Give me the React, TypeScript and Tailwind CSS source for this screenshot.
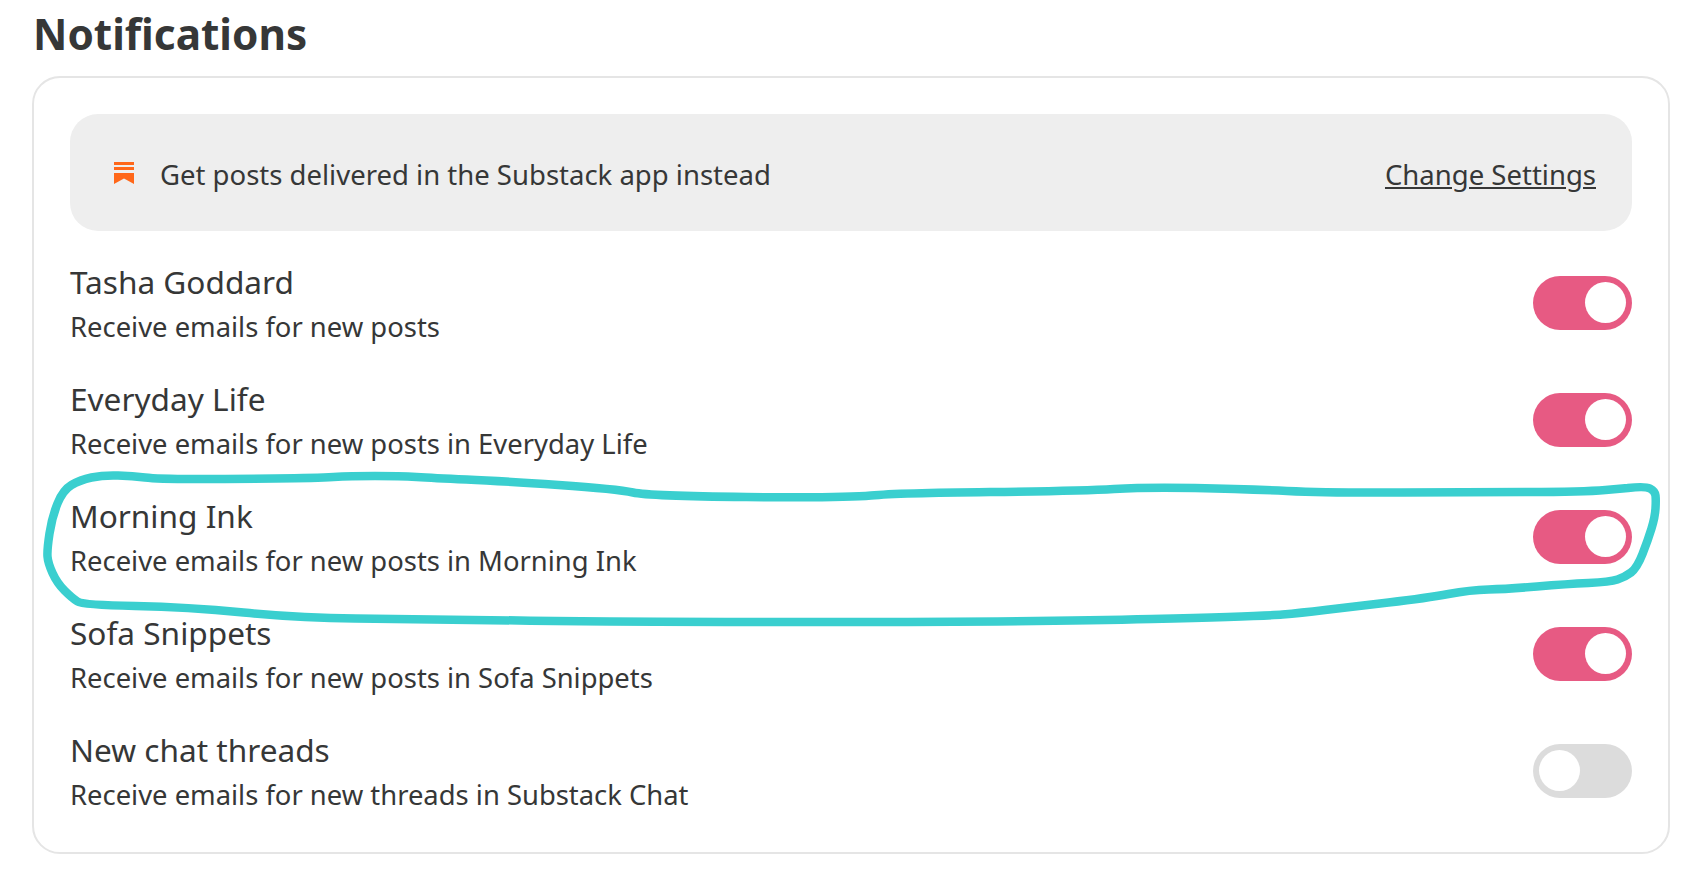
const rows = [
  { name: 'Tasha Goddard', sub: 'Receive emails for new posts', on: true },
  { name: 'Everyday Life', sub: 'Receive emails for new posts in Everyday Life', on: true },
  { name: 'Morning Ink', sub: 'Receive emails for new posts in Morning Ink', on: true },
  { name: 'Sofa Snippets', sub: 'Receive emails for new posts in Sofa Snippets', on: true },
  { name: 'New chat threads', sub: 'Receive emails for new threads in Substack Chat', on: false },
];

// hand-drawn annotation round the Morning Ink row
const scribble = [
  [1628, 488], [1645, 486], [1655, 491], [1656, 500], [1655, 517], [1648, 540], [1637, 568], [1625, 577],
  [1610, 582], [1567, 584], [1507, 589], [1470, 590], [1427, 598], [1350, 607], [1300, 613], [1265, 616],
  [1038, 622], [627, 622], [411, 619], [300, 618], [187, 607], [83, 605], [72, 598], [57, 583], [48, 563],
  [47, 550], [52, 517], [63, 490], [80, 480], [103, 475], [133, 476], [157, 479], [233, 479], [317, 478],
  [350, 476], [400, 476], [433, 478], [500, 481], [617, 489], [649, 496], [844, 498], [898, 493], [1082, 491],
  [1146, 487], [1244, 489], [1330, 493], [1473, 492], [1583, 492], [1628, 488],
];

function smoothPath(points: number[][]) {
  let d = `M${points[0][0]} ${points[0][1]}`;
  for (let i = 1; i < points.length - 1; i++) {
    const mx = (points[i][0] + points[i + 1][0]) / 2;
    const my = (points[i][1] + points[i + 1][1]) / 2;
    d += ` Q${points[i][0]} ${points[i][1]} ${mx} ${my}`;
  }
  const last = points[points.length - 1];
  return `${d} L${last[0]} ${last[1]}`;
}

function Toggle({ on }: { on: boolean }) {
  return (
    <div
      className={`flex h-[54px] w-[99px] shrink-0 items-center rounded-full px-[6px] ${
        on ? 'justify-end bg-[#e75a83]' : 'justify-start bg-[#dcdcdc]'
      }`}
    >
      <div className="h-[41px] w-[41px] rounded-full bg-white" />
    </div>
  );
}

export default function App() {
  return (
    <div className="relative h-[888px] w-[1696px] overflow-hidden bg-white font-['Noto_Sans',sans-serif] text-[#363737]">
      <h1 className="pl-[33px] pt-[5px] text-[42.3px] font-bold leading-[58px]">Notifications</h1>
      <div className="ml-[32px] mt-[13px] h-[778px] w-[1638px] rounded-[28px] border-2 border-[#e5e5e5] px-[36px] pt-[36px]">
        <div className="flex h-[117px] items-center justify-between rounded-[28px] bg-[#eeeeee] pl-[44px] pr-[36px]">
          <div className="flex items-center gap-[26px]">
            <svg width="20" height="22" viewBox="0 0 20 22" fill="#ff6719">
              <rect x="0" y="0" width="20" height="3" />
              <rect x="0" y="5" width="20" height="3" />
              <path d="M0 11h20v11l-10-5.5-10 5.5z" />
            </svg>
            <span className="pt-[4px] text-[27.5px] leading-[36px]">Get posts delivered in the Substack app instead</span>
          </div>
          <a className="pt-[4px] text-[27.5px] leading-[36px] underline">Change Settings</a>
        </div>
        <div className="mt-[13px] flex flex-col">
          {rows.map((row) => (
            <div key={row.name} className="flex h-[117px] items-center justify-between">
              <div className="flex flex-col pt-[2px]">
                <span className="text-[31.6px] leading-[47px]">{row.name}</span>
                <span className="text-[27.4px] leading-[44px]">{row.sub}</span>
              </div>
              <Toggle on={row.on} />
            </div>
          ))}
        </div>
      </div>
      <svg className="pointer-events-none absolute left-0 top-0" width="1696" height="888" fill="none">
        <path d={smoothPath(scribble)} stroke="#3acfcf" strokeWidth="8.5" strokeLinecap="round" strokeLinejoin="round" />
      </svg>
    </div>
  );
}
